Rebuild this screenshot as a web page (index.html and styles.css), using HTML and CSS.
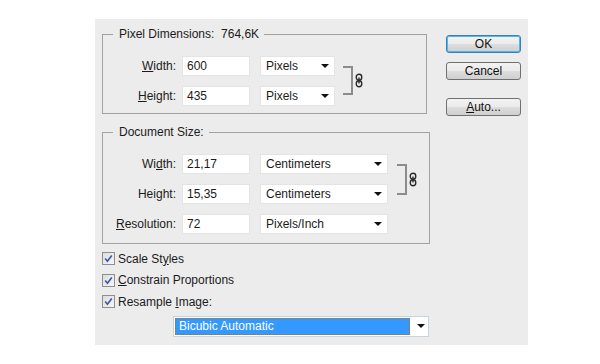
FILE: index.html
```html
<!DOCTYPE html>
<html>
<head>
<meta charset="utf-8">
<link rel="stylesheet" href="styles.css">
</head>
<body>
<div class="dialog">
  <div class="main">
    <fieldset class="group g1">
      <legend>Pixel Dimensions:&nbsp; 764,6K</legend>
      <div class="rows">
        <div class="fields">
          <div class="row">
            <span class="lbl"><u>W</u>idth:</span>
            <span class="inp">600</span>
            <span class="sel s-short">Pixels<i class="arr"></i></span>
          </div>
          <div class="row">
            <span class="lbl"><u>H</u>eight:</span>
            <span class="inp">435</span>
            <span class="sel s-short">Pixels<i class="arr"></i></span>
          </div>
        </div>
        <div class="link link1">
          <span class="bracket"></span>
          <svg class="chain" width="8" height="15" viewBox="0 0 8 15"><rect x="1.25" y="1.25" width="5.5" height="6" rx="2.75" fill="none" stroke="#2a2a2a" stroke-width="1.4"/><rect x="1.25" y="7.75" width="5.5" height="6" rx="2.75" fill="none" stroke="#2a2a2a" stroke-width="1.4"/><line x1="4" y1="4.5" x2="4" y2="10.5" stroke="#2a2a2a" stroke-width="1.4"/></svg>
        </div>
      </div>
    </fieldset>

    <fieldset class="group g2">
      <legend>Document Size:</legend>
      <div class="rows">
        <div class="fields">
          <div class="row">
            <span class="lbl">Wi<u>d</u>th:</span>
            <span class="inp">21,17</span>
            <span class="sel s-long">Centimeters<i class="arr"></i></span>
          </div>
          <div class="row">
            <span class="lbl">Hei<u>g</u>ht:</span>
            <span class="inp">15,35</span>
            <span class="sel s-long">Centimeters<i class="arr"></i></span>
          </div>
          <div class="row">
            <span class="lbl"><u>R</u>esolution:</span>
            <span class="inp">72</span>
            <span class="sel s-long">Pixels/Inch<i class="arr"></i></span>
          </div>
        </div>
        <div class="link link2">
          <span class="bracket"></span>
          <svg class="chain" width="8" height="15" viewBox="0 0 8 15"><rect x="1.25" y="1.25" width="5.5" height="6" rx="2.75" fill="none" stroke="#2a2a2a" stroke-width="1.4"/><rect x="1.25" y="7.75" width="5.5" height="6" rx="2.75" fill="none" stroke="#2a2a2a" stroke-width="1.4"/><line x1="4" y1="4.5" x2="4" y2="10.5" stroke="#2a2a2a" stroke-width="1.4"/></svg>
        </div>
      </div>
    </fieldset>

    <div class="checks">
      <div class="chk"><span class="box"><svg width="9" height="9" viewBox="0 0 9 9"><path d="M1.2 4.6 L3.4 7.2 L7.8 1.4" fill="none" stroke="#3b56a8" stroke-width="1.6"/></svg></span><span class="chk-text">Scale St<u>y</u>les</span></div>
      <div class="chk"><span class="box"><svg width="9" height="9" viewBox="0 0 9 9"><path d="M1.2 4.6 L3.4 7.2 L7.8 1.4" fill="none" stroke="#3b56a8" stroke-width="1.6"/></svg></span><span class="chk-text"><u>C</u>onstrain Proportions</span></div>
      <div class="chk"><span class="box"><svg width="9" height="9" viewBox="0 0 9 9"><path d="M1.2 4.6 L3.4 7.2 L7.8 1.4" fill="none" stroke="#3b56a8" stroke-width="1.6"/></svg></span><span class="chk-text">Resample <u>I</u>mage:</span></div>
    </div>

    <div class="combo">
      <span class="combo-val">Bicubic Automatic</span>
      <i class="arr"></i>
    </div>
  </div>

  <div class="buttons">
    <div class="btn btn-default">OK</div>
    <div class="btn">Cancel</div>
    <div class="btn btn-auto"><u>A</u>uto...</div>
  </div>
</div>
</body>
</html>
```

FILE: styles.css
```css
* { box-sizing: border-box; }
html, body { margin: 0; padding: 0; background: #ffffff; }
body {
  font-family: "Liberation Sans", Arial, sans-serif;
  font-size: 12px;
  color: #1b1b1b;
}
.dialog {
  margin: 19px 0 0 95px;
  width: 433px;
  height: 326px;
  background: #ececec;
  display: flex;
}
.main {
  padding: 8px 0 0 7px;
  width: 351px;
  display: flex;
  flex-direction: column;
}
.group {
  margin: 0;
  border: 1px solid #a2a2a2;
  padding: 14px 0 0 0;
  min-width: 0;
}
.g1 { width: 325px; height: 87px; }
.g2 { width: 328px; height: 119px; margin-top: 11px; }
.group legend {
  margin-left: 10px;
  padding: 0 5px 0 6px;
  line-height: 15px;
  height: 15px;
}
.rows { display: flex; align-items: flex-start; }
.fields { display: flex; flex-direction: column; gap: 10px; }
.row {
  display: grid;
  grid-template-columns: 73px 68px auto;
  column-gap: 6px;
  align-items: center;
  height: 20px;
}
.lbl { text-align: right; }
.inp {
  height: 20px;
  line-height: 19px;
  background: #ffffff;
  border: 1px solid #e4e4e4;
  padding-left: 4px;
}
.sel {
  margin-left: 4px;
  height: 20px;
  line-height: 19px;
  background: #ffffff;
  border: 1px solid #e4e4e4;
  padding-left: 5px;
  display: flex;
  align-items: center;
  justify-content: space-between;
  padding-right: 5px;
}
.s-short { width: 75px; }
.s-long { width: 128px; }
.arr {
  display: block;
  width: 0; height: 0;
  border-left: 4px solid transparent;
  border-right: 4px solid transparent;
  border-top: 4px solid #111;
}
.link { display: flex; align-items: center; }
.link1 { margin: 10px 0 0 8px; }
.link2 { margin: 10px 0 0 9px; }
.bracket {
  display: block;
  width: 10px;
  height: 29px;
  border: 2px solid #8c8c8c;
  border-left: none;
}
.link2 .bracket { height: 31px; }
.chain { margin-left: 2px; display: block; }

.checks { margin-top: 4px; display: flex; flex-direction: column; }
.chk {
  height: 21.5px;
  display: flex;
  align-items: center;
}
.box {
  width: 13px; height: 13px;
  border: 1px solid #8e8f8f;
  background: linear-gradient(135deg, #dcdcdc, #f6f6f6);
  margin-right: 3px;
  display: flex;
  align-items: center;
  justify-content: center;
}
.box svg { display: block; }

.combo {
  margin: 3px 0 0 71px;
  width: 256px;
  height: 21px;
  background: #ffffff;
  border: 1px solid #c9d3dc;
  display: flex;
  align-items: center;
  padding: 1px;
}
.combo-val {
  width: 235px;
  height: 17px;
  line-height: 15px;
  background: #3399ff;
  color: #ffffff;
  border: 1px dotted #c26c00;
  padding-left: 3px;
}
.combo .arr { margin-left: 7px; }

.buttons {
  padding-top: 16px;
  display: flex;
  flex-direction: column;
}
.btn {
  width: 75px;
  height: 18px;
  border: 1px solid #707070;
  border-radius: 3px;
  background: linear-gradient(#f3f3f3 0%, #ebebeb 48%, #dddddd 52%, #cfcfcf 100%);
  text-align: center;
  line-height: 16px;
  color: #111;
}
.btn-default {
  border-color: #3c7fb1;
  box-shadow: inset 0 0 0 1px #4fb8ef;
}
.btn + .btn { margin-top: 9px; }
.btn-auto { margin-top: 18px !important; }
```
